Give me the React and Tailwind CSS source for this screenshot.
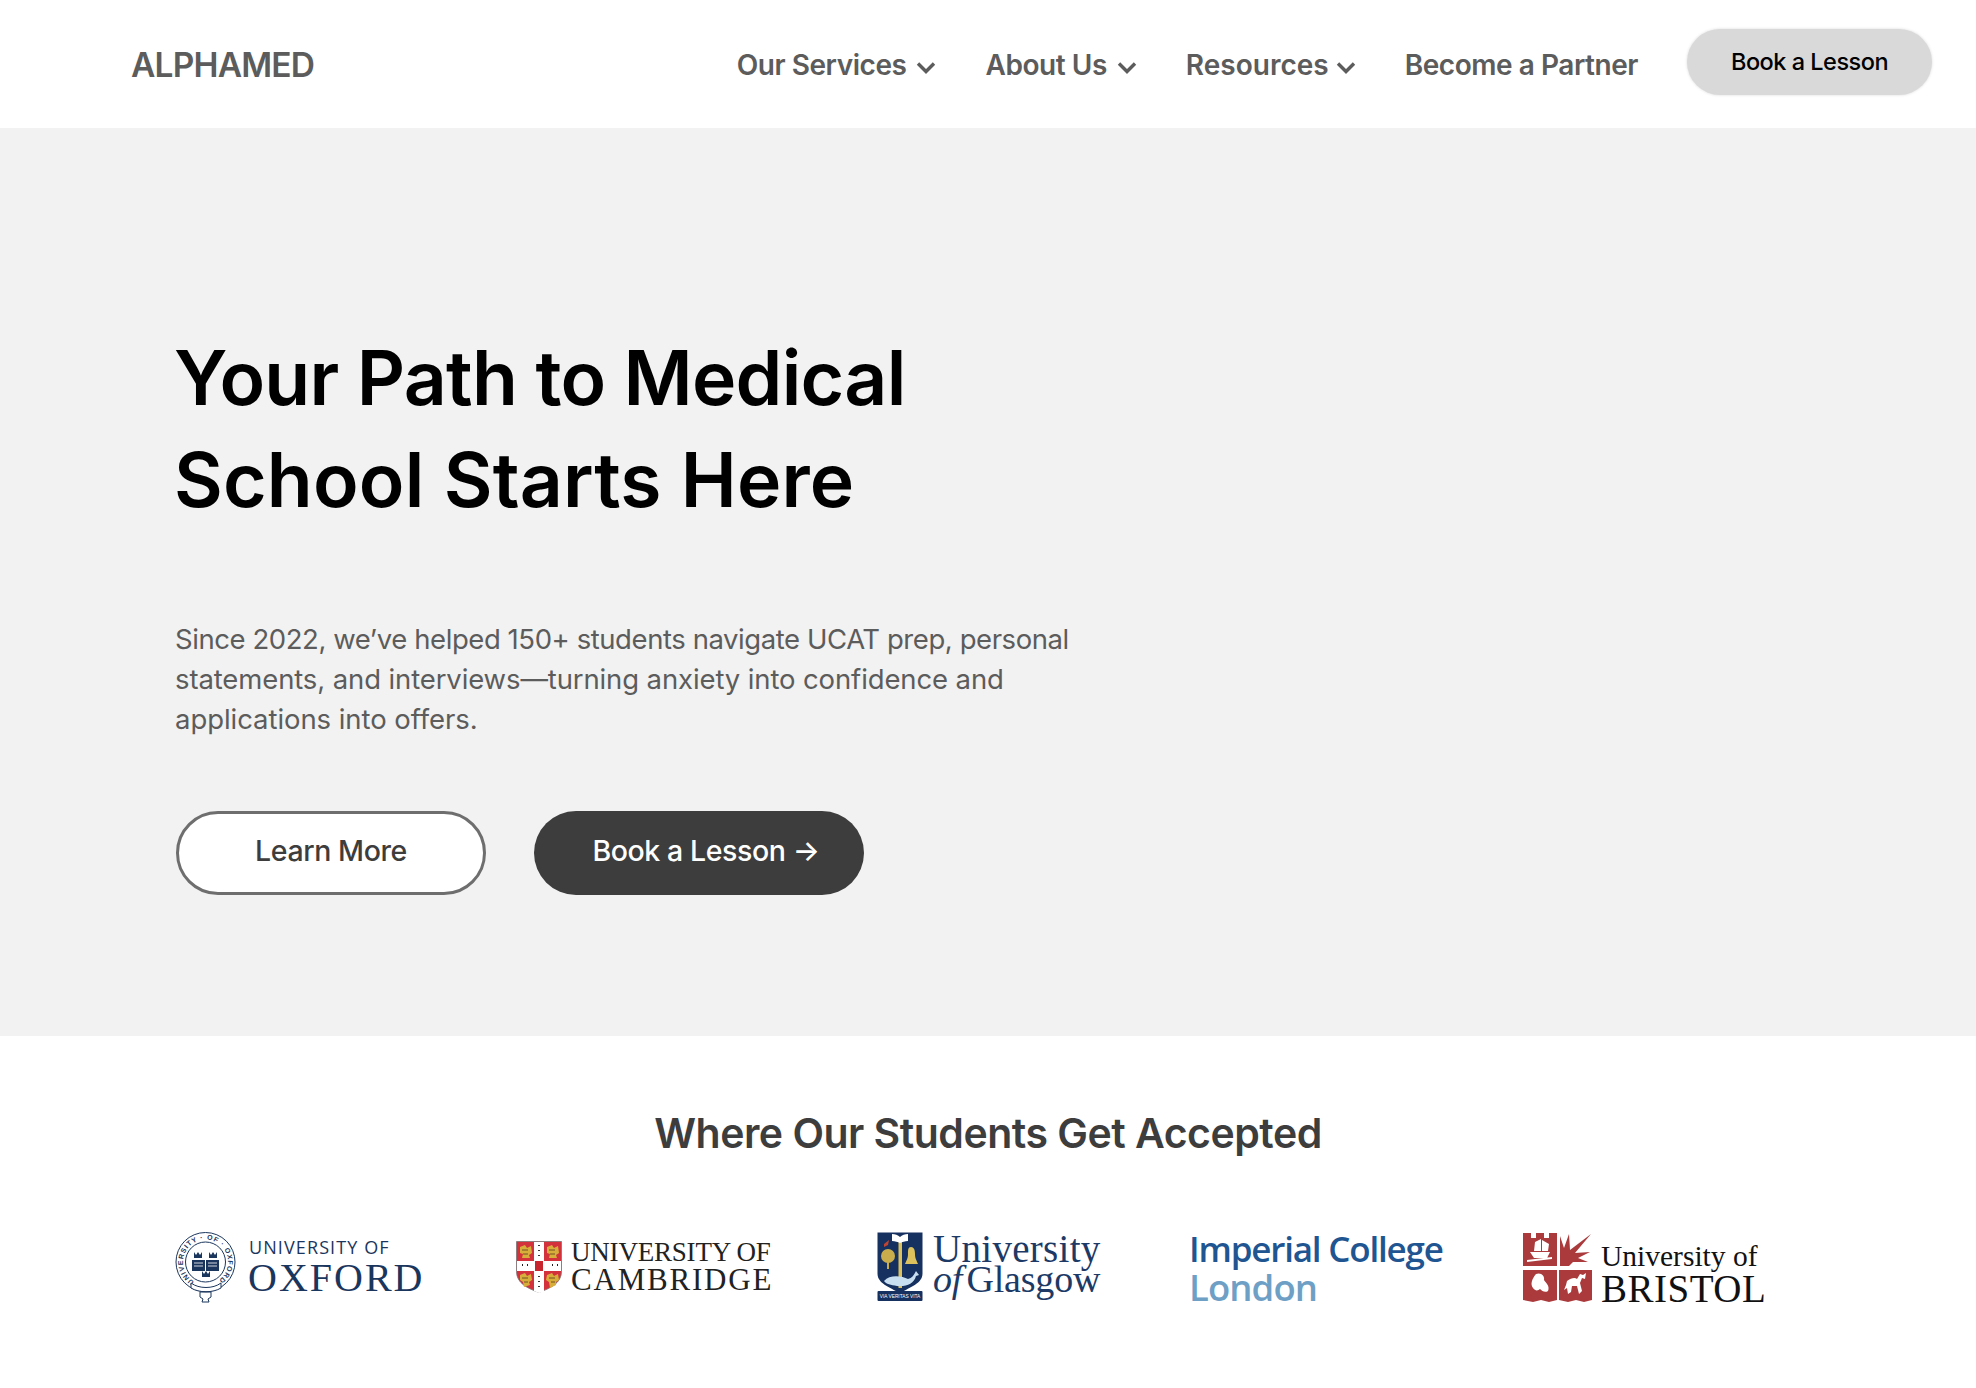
import React from 'react';

function Chevron() {
  return (
    <svg width="20" height="13" viewBox="0 0 20 13" fill="none" className="mt-[4px]">
      <path d="M2 2.5l8 8 8-8" stroke="#5c5c5c" strokeWidth="3.4" />
    </svg>
  );
}

function NavItem({ label, gap, tracking = 'tracking-[-0.45px]', arrow = true }) {
  return (
    <a className={`flex items-center ${gap} ${tracking} pt-[2px] text-[28px] leading-[34px] font-semibold text-[#5c5c5c]`}>
      <span>{label}</span>
      {arrow && <Chevron />}
    </a>
  );
}

function OxfordCrest() {
  return (
    <svg width="62" height="72" viewBox="0 0 62 72" className="shrink-0">
      <circle cx="30.500" cy="30" r="29.500" fill="none" stroke="#1b365d" strokeWidth="1" />
      <circle cx="30.500" cy="30" r="20" fill="none" stroke="#1b365d" strokeWidth="1" />
      <defs>
        <path id="oxring" d="M30.500 52.500a22.500 22.500 0 1 1 .01 0" transform="rotate(30 30.500 30)" />
      </defs>
      <text fontSize="7" fontWeight="600" fill="#1b365d" fontFamily="Liberation Sans, sans-serif" letterSpacing="0.9">
        <textPath href="#oxring">UNIVERSITY · OF · OXFORD</textPath>
      </text>
      <path d="M19 20l2 3 2-3 2 3 2-3v6h-8zM34 20l2 3 2-3 2 3 2-3v6h-8zM27 39l2 3 2-3 2 3 2-3v6h-8z" fill="#1b365d" />
      <rect x="17" y="28" width="13" height="11" fill="#1b365d" />
      <rect x="31" y="28" width="13" height="11" fill="#1b365d" />
      <path d="M19 31h9M19 34h9M33 31h9M33 34h9" stroke="#ffffff" strokeWidth="0.8" />
      <path d="M16 51c8 6 22 6 30 0v5c-8 5-22 5-30 0zM25 60h11v5l-3 2 1 3h-7l1-3-3-2z" fill="#ffffff" stroke="#1b365d" strokeWidth="1" />
    </svg>
  );
}

function CambridgeCrest() {
  return (
    <svg width="46" height="52" viewBox="0 0 46 52" className="shrink-0">
      <path d="M0.500 0.500h45v30c0 12-12 17-22.500 21C12 47.500 0.500 42.500 0.500 30.500z" fill="#d3323c" stroke="#777" strokeWidth="0.8" />
      <path d="M18 1h10v19h17v10H28v21l-5 1-5-2V30H1V20h17z" fill="#ffffff" />
      <rect x="19" y="20" width="8" height="10" fill="#c9252e" />
      <path d="M4 6l5-2 2 3 4-2 1 7-3 2 1 3H6l1-4-3-1zM31 6l5-2 2 3 4-2 1 7-3 2 1 3h-8l1-4-3-1zM4 34l5-2 2 3 4-2 1 6-3 2 1 3-6 2-1-5-3-2zM31 34l5-2 2 3 4-2 1 6-3 2 0 3-6 3-1-6-3-2z" fill="#d7ae3a" />
      <path d="M6 9h6M7 13h5M33 9h6M34 13h5M6 37h6M8 41h4M33 37h6M35 41h4" stroke="#5b3a1c" strokeWidth="0.8" />
      <path d="M23 4v1M23 9v1M23 14v1M6 24h1M11 24h1M36 24h1M41 24h1M23 35v1M23 40v1M23 45v1" stroke="#222" strokeWidth="1.800" />
    </svg>
  );
}

function GlasgowCrest() {
  return (
    <svg width="46" height="70" viewBox="0 0 46 70" className="shrink-0">
      <path d="M0.500 0.500h45v41c0 10-12 13-22.500 20C12 54.500 0.500 51.500 0.500 41.500z" fill="#16315f" />
      <rect x="21.500" y="8" width="3.500" height="48" fill="#dcc15c" />
      <path d="M15 2c3 0 6 1 8 3 2-2 5-3 8-3v7c-3 0-6 1-8 2-2-1-5-2-8-2z" fill="#ffffff" />
      <circle cx="11" cy="24" r="7" fill="#c9ad4d" />
      <rect x="10" y="29" width="2" height="8" fill="#c9ad4d" />
      <path d="M34 15c3 0 4 3 4 7 0 5 2 7 3 10H28c1-3 3-5 3-10 0-4 0-7 3-7z" fill="#dcc15c" />
      <path d="M7 12l5-4-1 5-4 2z" fill="#c2432f" />
      <path d="M7 49c6-7 18-5 24-2 4-1 6-4 8-8l3 4-3 1c-2 8-10 11-19 10-6-1-11-2-13-5z" fill="#c7dff0" />
      <rect x="0.500" y="59" width="45" height="10" rx="1" fill="#16315f" />
      <text x="23" y="66" textAnchor="middle" fontSize="4.800" fill="#ffffff" fontFamily="Liberation Sans, sans-serif">VIA VERITAS VITA</text>
    </svg>
  );
}

function BristolCrest() {
  return (
    <svg width="69" height="70" viewBox="0 0 69 70" className="shrink-0">
      <path d="M0 0h8v5h5V0h8v5h5V0h8v33H0z" fill="#aa3a3c" />
      <path d="M37 33V3l4 12 5-14 1 16L68 1 52 20l15-1-12 6 10 4H50l-4 4z" fill="#aa3a3c" />
      <path d="M0 37h34v30l-8 2-8-2-8 2-10-2z" fill="#aa3a3c" />
      <path d="M36 37h33v30l-8 2-8-2-8 2-9-2z" fill="#aa3a3c" />
      <path d="M7 19h20l-3 6H11zM12 9l6-3v12h-7zM19 7l7 4-1 7h-6zM4 27l25-3v2L4 29z" fill="#ffffff" />
      <path d="M13 41c5-2 9 2 8 6 2 3 6 6 4 11-3 2-6 0-8-2-2 2-5 2-7-1-3-4-1-9 3-14z" fill="#ffffff" />
      <path d="M44 48c4-3 8-4 10-2l3-5 3 1 3-2-1 6-3-1-2 5 2 8-3 3-2-8h-5l-1 6-3 2-1-6-3 2 2-5z" fill="#ffffff" />
    </svg>
  );
}

function Logos() {
  return (
    <div className="grid grid-cols-[341px_361px_312px_334px_auto] grid-rows-[72px] items-center h-[72px]">
      <div className="mt-[2px] flex items-center gap-[11px]">
        <OxfordCrest />
        <div className="mb-[4px] text-[#1b365d]">
          <div className="ml-[1px] text-[18px] leading-[22px] tracking-[1.1px] font-['Open_Sans',sans-serif]">UNIVERSITY OF</div>
          <div className="mt-[2px] text-[40px] leading-[36px] tracking-[2px] font-['Liberation_Serif',serif]">OXFORD</div>
        </div>
      </div>
      <div className="flex items-center gap-[9px] text-[#222222] font-['Liberation_Serif',serif]">
        <CambridgeCrest />
        <div className="mb-[2px] leading-[28px]">
          <div className="text-[27px] -tracking-[0.2px]">UNIVERSITY OF</div>
          <div className="text-[31px] tracking-[1.8px]">CAMBRIDGE</div>
        </div>
      </div>
      <div className="flex items-center gap-[10px] text-[#1d3a66] font-['Liberation_Serif',serif]">
        <GlasgowCrest />
        <div className="mb-[6px] leading-[31px]">
          <div className="text-[39px] tracking-[0.3px]">University</div>
          <div className="text-[38px] -tracking-[0.2px]"><span className="italic mr-[-5px]">of</span> Glasgow</div>
        </div>
      </div>
      <div className="pt-[1px] leading-[38px] font-semibold font-['Open_Sans',sans-serif]">
        <div className="text-[35px] tracking-[-1.2px] text-[#1f5591]">Imperial College</div>
        <div className="text-[36.500px] tracking-[-0.9px] text-[#6ea0c6]">London</div>
      </div>
      <div className="mt-[1px] flex items-center gap-[9px] text-[#111111] font-['Liberation_Serif',serif]">
        <BristolCrest />
        <div className="pt-[12px]">
          <div className="text-[29.500px] leading-[30px]">University of</div>
          <div className="text-[39px] leading-[35px] tracking-[0.5px]">BRISTOL</div>
        </div>
      </div>
    </div>
  );
}

export default function App() {
  return (
    <div className="bg-white min-h-[1388px] font-['Inter',sans-serif]">
      <header className="h-[128px] flex items-center justify-between pl-[131px] pr-[44px]">
        <div className="pt-[2px] text-[33.500px] font-semibold tracking-[-0.8px] text-[#5c5c5c]">ALPHAMED</div>
        <nav className="flex items-center gap-[49px]">
          <NavItem label="Our Services" gap="gap-[10px]" />
          <NavItem label="About Us" gap="gap-[10px]" />
          <NavItem label="Resources" gap="gap-[7px]" tracking="tracking-[0px]" />
          <NavItem label="Become a Partner" gap="" arrow={false} />
          <button className="mb-[5px] w-[245px] h-[66px] rounded-full bg-[#d9d9d9] shadow-[0_0_3px_rgba(0,0,0,0.15)] text-[23.500px] font-medium tracking-[-0.5px] text-black">
            Book a Lesson
          </button>
        </nav>
      </header>

      <section className="bg-[#f2f2f2] pl-[175px] pt-[199px] pb-[141px]">
        <h1 className="-ml-[1px] text-[75px] leading-[102px] font-semibold text-black">
          <span className="block tracking-[-0.72px]">Your Path to Medical</span>
          <span className="block tracking-[0.2px]">School Starts Here</span>
        </h1>
        <p className="mt-[88px] w-[920px] text-[27.500px] leading-[40px] text-[#5c5c5c]">
          <span className="block tracking-[-0.43px]">Since 2022, we’ve helped 150+ students navigate UCAT prep, personal</span>
          <span className="block tracking-[-0.12px]">statements, and interviews—turning anxiety into confidence and</span>
          <span className="block tracking-[-0.06px]">applications into offers.</span>
        </p>
        <div className="mt-[72px] ml-[1px] flex gap-[48px]">
          <button className="w-[310px] h-[84px] pb-[4px] rounded-full border-[3px] border-[#6e6e6e] bg-white text-[28.500px] font-medium tracking-[-0.4px] text-[#3d3d3d]">
            Learn More
          </button>
          <button className="w-[330px] h-[84px] pb-[3px] pl-[14px] rounded-full bg-[#3d3d3d] text-[28.500px] font-medium tracking-[-0.4px] text-white">
            Book a Lesson →
          </button>
        </div>
      </section>

      <section className="px-[175px] pt-[67px]">
        <h2 className="text-center text-[41px] leading-[60px] font-semibold tracking-[-0.5px] text-[#3d3d3d]">
          Where Our Students Get Accepted
        </h2>
        <div className="mt-[68px]">
          <Logos />
        </div>
      </section>
    </div>
  );
}
